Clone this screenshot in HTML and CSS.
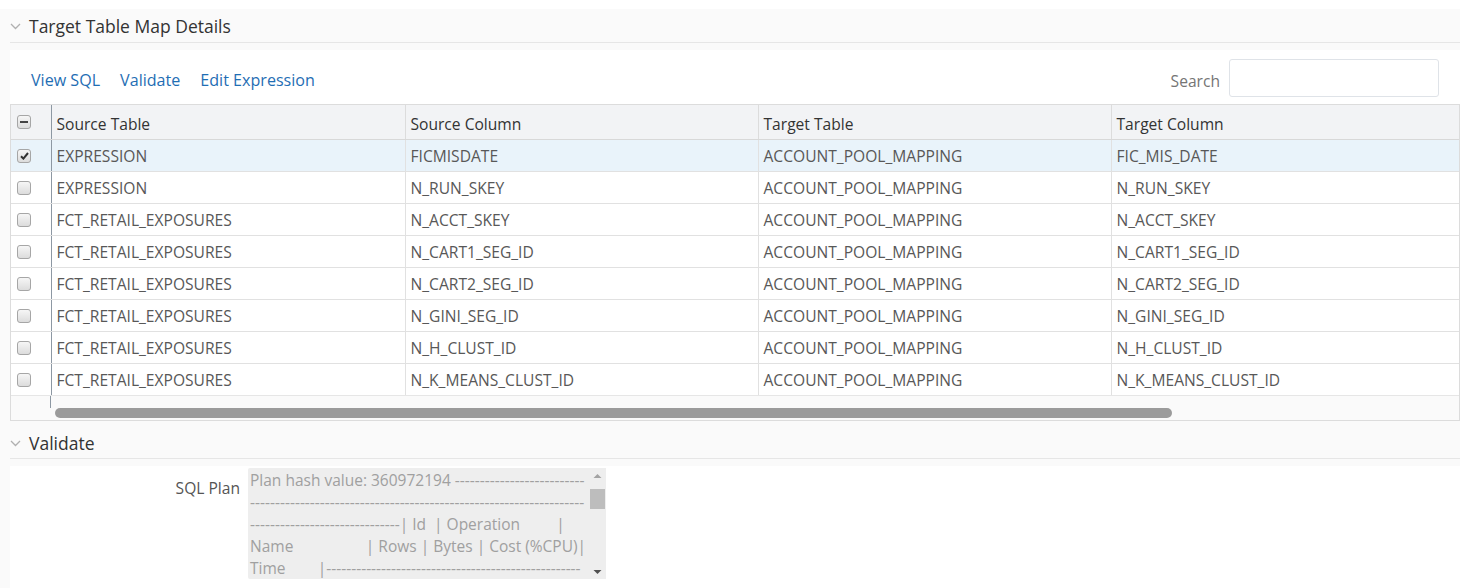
FILE: index.html
```html
<!DOCTYPE html>
<html>
<head>
<meta charset="utf-8">
<link rel="stylesheet" href="styles.css">
</head>
<body>
<div class="region">
  <div class="sec-head">
    <svg class="chev" width="11" height="7" viewBox="0 0 11 7"><polyline points="1,1 5.5,5.5 10,1" fill="none" stroke="#b0b0b0" stroke-width="1.3"/></svg>
    <span class="sec-title">Target Table Map Details</span>
  </div>
  <div class="panel">
    <div class="toolbar">
      <div class="links">
        <a class="lnk">View SQL</a>
        <a class="lnk">Validate</a>
        <a class="lnk">Edit Expression</a>
      </div>
      <div class="search">
        <span class="search-lbl">Search</span>
        <div class="search-box"></div>
      </div>
    </div>
    <div class="grid">
      <table class="tbl">
        <colgroup><col class="c0"><col class="c1"><col class="c2"><col class="c3"><col class="c4"></colgroup>
        <thead>
          <tr><th class="cb"><span class="chk mixed"></span></th><th>Source Table</th><th>Source Column</th><th>Target Table</th><th>Target Column</th></tr>
        </thead>
        <tbody>
          <tr class="sel"><td class="cb"><span class="chk on"><svg width="9" height="8" viewBox="0 0 9 8"><polyline points="1,4.2 3.4,6.6 8,1" fill="none" stroke="#333" stroke-width="2"/></svg></span></td><td>EXPRESSION</td><td>FICMISDATE</td><td>ACCOUNT_POOL_MAPPING</td><td>FIC_MIS_DATE</td></tr>
          <tr><td class="cb"><span class="chk"></span></td><td>EXPRESSION</td><td>N_RUN_SKEY</td><td>ACCOUNT_POOL_MAPPING</td><td>N_RUN_SKEY</td></tr>
          <tr><td class="cb"><span class="chk"></span></td><td>FCT_RETAIL_EXPOSURES</td><td>N_ACCT_SKEY</td><td>ACCOUNT_POOL_MAPPING</td><td>N_ACCT_SKEY</td></tr>
          <tr><td class="cb"><span class="chk"></span></td><td>FCT_RETAIL_EXPOSURES</td><td>N_CART1_SEG_ID</td><td>ACCOUNT_POOL_MAPPING</td><td>N_CART1_SEG_ID</td></tr>
          <tr><td class="cb"><span class="chk"></span></td><td>FCT_RETAIL_EXPOSURES</td><td>N_CART2_SEG_ID</td><td>ACCOUNT_POOL_MAPPING</td><td>N_CART2_SEG_ID</td></tr>
          <tr><td class="cb"><span class="chk"></span></td><td>FCT_RETAIL_EXPOSURES</td><td>N_GINI_SEG_ID</td><td>ACCOUNT_POOL_MAPPING</td><td>N_GINI_SEG_ID</td></tr>
          <tr><td class="cb"><span class="chk"></span></td><td>FCT_RETAIL_EXPOSURES</td><td>N_H_CLUST_ID</td><td>ACCOUNT_POOL_MAPPING</td><td>N_H_CLUST_ID</td></tr>
          <tr><td class="cb"><span class="chk"></span></td><td>FCT_RETAIL_EXPOSURES</td><td>N_K_MEANS_CLUST_ID</td><td>ACCOUNT_POOL_MAPPING</td><td>N_K_MEANS_CLUST_ID</td></tr>
        </tbody>
      </table>
      <div class="hscroll">
        <div class="hs-frozen"></div>
        <div class="hs-track"><div class="hs-thumb"></div></div>
      </div>
    </div>
  </div>
  <div class="sec-head sec2">
    <svg class="chev" width="11" height="7" viewBox="0 0 11 7"><polyline points="1,1 5.5,5.5 10,1" fill="none" stroke="#b0b0b0" stroke-width="1.3"/></svg>
    <span class="sec-title">Validate</span>
  </div>
  <div class="panel2">
    <div class="form-row">
      <span class="form-lbl">SQL Plan</span>
      <div class="plan">
        <div class="plan-text"><div class="pl">Plan hash value: 360972194 --------------------------</div><div class="pl">-------------------------------------------------------------------</div><div class="pl">------------------------------| Id  | Operation         |</div><div class="pl">Name                  | Rows | Bytes | Cost (%CPU)|</div><div class="pl">Time        |---------------------------------------------------</div></div>
        <div class="vscroll">
          <svg width="17" height="14" viewBox="0 0 17 14"><polygon points="4.5,10 8.5,6 12.5,10" fill="#a3a3a3"/></svg>
          <div class="vs-thumb"></div>
          <div class="vs-fill"></div>
          <svg width="17" height="14" viewBox="0 0 17 14"><polygon points="4.5,5 8.5,9 12.5,5" fill="#505050"/></svg>
        </div>
      </div>
    </div>
  </div>
</div>
</body>
</html>
```

FILE: styles.css
```css
* { box-sizing: border-box; }
html, body { margin: 0; padding: 0; background: #ffffff; }
body {
  font-family: "Open Sans", "Noto Sans", "Liberation Sans", sans-serif;
  font-size: 15.6px;
  color: #333;
  height: 588px;
  overflow: hidden;
}
.region {
  margin-top: 9px;
  width: 1460px;
  background: #fafafa;
  height: 579px;
}
.sec-head {
  margin-left: 10px;
  height: 34px;
  display: flex;
  align-items: center;
  border-bottom: 1px solid #e6e6e6;
  padding-top: 1px;
}
.chev { margin-left: 0; margin-right: 8px; }
.sec-title { font-size: 17.5px; color: #333; }
.panel {
  margin: 7px 0 0 10px;
  background: #ffffff;
}
.toolbar {
  display: flex;
  align-items: center;
  justify-content: space-between;
  height: 54px;
  padding: 2px 21px 0 21px;
}
.links { display: flex; gap: 20px; padding-top: 4px; }
.lnk { color: #1f6eb4; font-size: 16.1px; cursor: pointer; }
.search { display: flex; align-items: center; gap: 9px; }
.search-lbl { color: #757575; font-size: 15.6px; padding-top: 5px; }
.search-box {
  width: 210px;
  height: 38px;
  border: 1px solid #dfe3e8;
  border-radius: 3px;
  background: #fff;
}
.grid {
  border: 1px solid #dcdcdc;
  width: 1450px;
  background: #fff;
}
.tbl {
  border-collapse: collapse;
  table-layout: fixed;
  width: 1448px;
}
.c0 { width: 40px; }
.c1 { width: 354px; }
.c2 { width: 353px; }
.c3 { width: 353px; }
.c4 { width: 348px; }
.tbl th {
  height: 34px;
  background: #f2f3f5;
  font-weight: normal;
  text-align: left;
  padding: 5px 5px 0 5px;
  color: #333;
  border-left: 1px solid #dcdcdc;
  border-bottom: 1px solid #d8d8d8;
  white-space: nowrap;
}
.tbl td {
  height: 32px;
  padding: 2px 5px 0 5px;
  color: #585858;
  border-left: 1px solid #e1e1e1;
  border-bottom: 1px solid #e1e1e1;
  white-space: nowrap;
}
.tbl th.cb, .tbl td.cb {
  border-left: none;
  border-right: 1px solid #8d98a3;
  padding: 0 0 0 7px;
}
.tbl th.cb { padding-bottom: 2px; }
.tbl th:nth-child(2), .tbl td:nth-child(2) { border-left: 1px solid #8d98a3; }
.tbl tr.sel td { background: #e9f3fa; }
.tbl tbody tr:last-child td { border-bottom: 1px solid #e6e6e6; }
.chk {
  display: inline-flex;
  align-items: center;
  justify-content: center;
  width: 14px;
  height: 14px;
  border: 1px solid #a6a6a6;
  border-radius: 3px;
  background: linear-gradient(#f6f6f6, #dcdcdc);
  vertical-align: middle;
  position: relative;
  top: -1px;
  left: -1px;
}
.chk.mixed::after {
  content: "";
  width: 8px;
  height: 2px;
  background: #444;
}
.hscroll {
  display: flex;
  height: 24px;
  background: #fafafa;
}
.hs-frozen {
  width: 40px;
  border-right: 1px solid #8d98a3;
  height: 12px;
}
.hs-track { flex: 1; padding: 12px 0 0 4px; }
.hs-thumb {
  width: 1117px;
  height: 10px;
  border-radius: 5px;
  background: #9b9b9b;
}
.sec2 { margin-top: 7px; height: 31px; }
.panel2 {
  margin: 7px 0 0 10px;
  background: #ffffff;
  height: 130px;
}
.form-row {
  display: flex;
  align-items: flex-start;
  padding-top: 2px;
}
.form-lbl {
  width: 238px;
  text-align: right;
  color: #555;
  font-size: 15.6px;
  padding-top: 9px;
  padding-right: 8px;
}
.plan {
  display: flex;
  width: 358px;
  height: 111px;
  background: #eeeeee;
  border-radius: 2px;
}
.plan-text {
  flex: 1;
  overflow: hidden;
  color: #a0a0a0;
  font-size: 15.5px;
  line-height: 22px;
  padding: 1px 0 0 2px;
}
.pl { white-space: pre; }
.vscroll {
  width: 17px;
  display: flex;
  flex-direction: column;
  background: #eeeeee;
}
.vs-thumb {
  margin: 7px 1px 0 1px;
  height: 20px;
  background: #bdbdbd;
}
.vs-fill { flex: 1; }
```
